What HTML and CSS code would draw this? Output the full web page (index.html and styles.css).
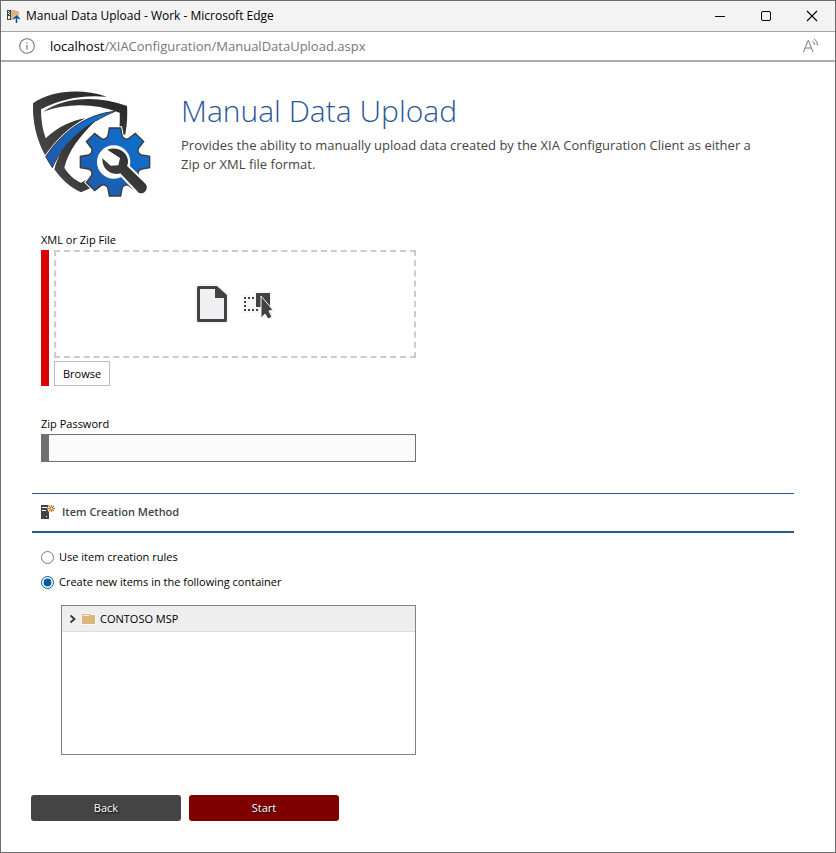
FILE: index.html
```html
<!DOCTYPE html>
<html lang="en">
<head>
  <meta charset="UTF-8">
  <meta name="viewport" content="width=device-width, initial-scale=1.0">
  <title>Manual Data Upload</title>
  <link rel="stylesheet" href="styles.css">
</head>
<body>
  <div class="window">

    <!-- Title bar -->
    <header class="titlebar">
      <svg class="app-icon" width="15" height="15" viewBox="0 0 15 15" aria-hidden="true">
        <path d="M4 1h5l1 1h3v9H4z" fill="#dcb67a"/>
        <path d="M1 1h4v10H1z" fill="#424242"/>
        <path d="M2 2h1v1H2zM3 3h1v1H3zM2 4h1v1H2zM3 5h1v1H3zM2 7h2v3H2z" fill="#f3f3f3"/>
        <path d="M7 13V9l3-3 4 3v4z" fill="#f3f3f3"/>
        <path d="M10.500 14V7.500M7.500 10l3-3 3 3" fill="none" stroke="#00539c" stroke-width="1.500"/>
      </svg>
      <span class="window-title">Manual Data Upload - Work - Microsoft Edge</span>
      <div class="window-buttons">
        <button type="button" aria-label="Minimize">
          <svg width="12" height="12" viewBox="0 0 12 12"><path d="M1 6.500h10" stroke="#000"/></svg>
        </button>
        <button type="button" aria-label="Maximize">
          <svg width="12" height="12" viewBox="0 0 12 12"><rect x="1.500" y="1.500" width="9" height="9" rx="1.500" fill="none" stroke="#000"/></svg>
        </button>
        <button type="button" aria-label="Close">
          <svg width="12" height="12" viewBox="0 0 12 12"><path d="M1 1l10 10M11 1L1 11" stroke="#000" stroke-width="1.100"/></svg>
        </button>
      </div>
    </header>

    <!-- Address bar -->
    <div class="addressbar">
      <svg width="16" height="16" viewBox="0 0 16 16" aria-hidden="true">
        <circle cx="8" cy="8" r="7.300" fill="none" stroke="#767676" stroke-width="1.100"/>
        <path d="M8 7v4.500M8 4.200v1.400" stroke="#767676" stroke-width="1.200"/>
      </svg>
      <span class="url"><b>localhost</b>/XIAConfiguration/ManualDataUpload.aspx</span>
      <button type="button" class="read-aloud" aria-label="Read aloud">
        <svg width="16" height="16" viewBox="0 0 16 16" fill="none" stroke="#767676">
          <path d="M.5 14L5 2.500h.500L10 14M2.300 10h6"/>
          <path d="M9.500 3q2 1.500 2 4M11 .7q3.700 2.300 3.500 6.800"/>
        </svg>
      </button>
    </div>

    <main class="page">
      <section class="intro">
        <svg class="logo" width="118" height="107" viewBox="24 15 354 321" aria-hidden="true">
          <defs>
            <linearGradient id="dark" x1="0" y1="1" x2="1" y2="0">
              <stop offset="0" stop-color="#4a4a4a"/>
              <stop offset="1" stop-color="#262626"/>
            </linearGradient>
            <linearGradient id="blue" x1="0" y1="1" x2="1" y2="0">
              <stop offset="0" stop-color="#2257a8"/>
              <stop offset="1" stop-color="#0a74d4"/>
            </linearGradient>
            <path id="gear" d="M-17-102H17L21-80A14 14 0 0 0 42-71L61-86 86-61 71-42A14 14 0 0 0 80-21L104-17V17L80 21A14 14 0 0 0 71 42L86 61 61 86 42 71A14 14 0 0 0 21 80L17 102H-17L-21 80A14 14 0 0 0-42 71L-61 86-86 61-71 42A14 14 0 0 0-80 21L-104 17V-17L-80-21A14 14 0 0 0-71-42L-86-61-61-86-42-71A14 14 0 0 0-21-80z"/>
            <path id="wrench" d="M247 191c25-10 55 2 61 27 2 8 1 16-2 22l56 54c10 14-4 34-21 26l-55-58c-28 8-56-13-54-45l25 22 23-1 5-22z"/>
          </defs>
          <!-- Shield -->
          <g fill="url(#dark)">
            <path d="M24 52C75 15 165 5 245 32 165 25 100 42 48 70c0 30 4 60 14 87 33-32 78-54 119-60-51 28-86 63-121 111C35 160 22 110 24 52z"/>
            <path d="M55 77C115 35 215 25 306 60c2 25 0 60-5 85l-21 10c4-30 5-50 4-75-74-28-154-30-229-3z"/>
            <path d="M88 250C105 190 140 130 208 108c-43 42-78 87-90 137 12 20 32 38 50 45l30-16 8 28-38 17c-33-14-58-39-80-69z"/>
          </g>
          <path d="M62 212C110 140 180 85 270 76 190 110 120 160 82 245z" fill="url(#blue)" stroke="#3a3a3a" stroke-width="3"/>
          <!-- Gear and wrench -->
          <g transform="translate(270 228)">
            <use href="#gear" fill="#fff" stroke="#fff" stroke-width="10"/>
            <use href="#gear" fill="url(#blue)" stroke="#3a3a3a" stroke-width="4"/>
          </g>
          <circle cx="266" cy="228" r="50" fill="#fff"/>
          <use href="#wrench" fill="#fff" stroke="#fff" stroke-width="12" stroke-linejoin="round"/>
          <use href="#wrench" fill="url(#dark)"/>
        </svg>
        <div class="intro-text">
          <h1>Manual Data Upload</h1>
          <p>Provides the ability to manually upload data created by the XIA Configuration Client as either a Zip or XML file format.</p>
        </div>
      </section>

      <form class="upload-form">
        <div class="field">
          <label for="browse">XML or Zip File</label>
          <div class="file-picker">
            <div class="dropzone">
              <svg width="36" height="44" viewBox="0 0 36 44" aria-hidden="true">
                <path d="M5 1h19l11 11v26q0 4-4 4H5q-4 0-4-4V5q0-4 4-4z" fill="#f6f6f6"/>
                <path d="M4.500 5.500h18l9 8v25h-27z" fill="#f0eff1" stroke="#424242" stroke-width="3" stroke-linejoin="round"/>
                <path d="M21 4l12 10v2H21z" fill="#424242"/>
              </svg>
              <svg width="32" height="32" viewBox="0 0 32 32" aria-hidden="true">
                <path d="M0 7h12V3h17v14l2 9-3 4-8 2v-7H0z" fill="#f6f6f6"/>
                <path d="M2 10h12M2 22h14" stroke="#424242" stroke-width="2" stroke-dasharray="2 2"/>
                <path d="M3 13v8" stroke="#424242" stroke-width="2" stroke-dasharray="2 2"/>
                <path d="M14 5h14v14H14z" fill="#424242"/>
                <path d="M19 8l12 14-4 1 3 6-4 2-3-5-4 4z" fill="#424242" stroke="#f6f6f6"/>
              </svg>
            </div>
            <button type="button" id="browse" class="browse">Browse</button>
          </div>
        </div>

        <div class="field">
          <label for="password">Zip Password</label>
          <input type="password" id="password" class="text-input">
        </div>

        <h2 class="section-title">
          <svg width="16" height="16" viewBox="0 0 16 16" aria-hidden="true">
            <path d="M1 1h8v14H1z" fill="#424242"/>
            <path d="M2 3.500h5M2 6.500h4" stroke="#fff"/>
            <path d="M6 12h1v1H6z" fill="#fff"/>
            <circle cx="11.500" cy="4.500" r="4" fill="#fff"/>
            <path d="M11.500 1v7M8 4.500h7M9 2l5 5M14 2L9 7" stroke="#c27d1a" stroke-width="1.200"/>
            <circle cx="11.500" cy="4.500" r="1" fill="#fff"/>
          </svg>
          Item Creation Method
        </h2>

        <div class="options">
          <label class="option"><input type="radio" name="method" value="rules"> Use item creation rules</label>
          <label class="option"><input type="radio" name="method" value="container" checked> Create new items in the following container</label>
        </div>

        <div class="tree">
          <div class="tree-node">
            <svg width="8" height="10" viewBox="0 0 8 10" aria-hidden="true">
              <path d="M1.500 1.500L5.500 5l-4 3.500" fill="none" stroke="#333" stroke-width="1.800"/>
            </svg>
            <svg class="folder" width="15" height="12" viewBox="0 0 15 12" aria-hidden="true">
              <path d="M0 0h11v1h4v11H0z" fill="#f8f8f8"/>
              <path d="M1 1h8l1 1h4v9H1z" fill="#dcb67a"/>
              <path d="M2 2h6l1 1H2z" fill="#f0eff1"/>
            </svg>
            <span>CONTOSO MSP</span>
          </div>
        </div>

        <div class="actions">
          <button type="button" class="btn">Back</button>
          <button type="submit" class="btn btn-start">Start</button>
        </div>
      </form>
    </main>
  </div>
</body>
</html>
```

FILE: styles.css
```css
:root {
  --blue: #2b579a;
  --dark: #444;
  --red: #d00;
  --frame: #6b6b6b;
}

* {
  box-sizing: border-box;
}

body {
  margin: 0;
  font-family: "Open Sans", "Noto Sans", sans-serif;
  font-size: 11px;
  line-height: 16px;
  color: #000;
  background: #fff;
}

button,
input {
  font: inherit;
}

.window {
  min-height: 100vh;
  border: 1px solid var(--frame);
}

/* Title bar */
.titlebar {
  display: flex;
  align-items: center;
  height: 31px;
  padding-left: 5px;
  background: #f3f3f3;
  border-bottom: 1px solid #a6a6a6;
}

.window-title {
  margin-left: 5px;
  font-size: 12px;
}

.window-buttons {
  display: flex;
  margin-left: auto;
}

.window-buttons button {
  display: flex;
  align-items: center;
  justify-content: center;
  width: 46px;
  height: 30px;
  padding: 0;
  border: none;
  background: none;
}

/* Address bar */
.addressbar {
  display: flex;
  align-items: center;
  height: 30px;
  padding: 0 16px 0 18px;
  border-bottom: 2px solid #ababab;
}

.url {
  margin-left: 15px;
  font-size: 13px;
  color: #767676;
}

.url b {
  font-weight: normal;
  color: #000;
}

.read-aloud {
  display: flex;
  margin-left: auto;
  padding: 0;
  border: none;
  background: none;
}

/* Page */
.page {
  padding: 29px 41px 30px 30px;
}

.intro {
  display: flex;
  gap: 30px;
  padding-left: 2px;
}

.logo {
  flex: none;
}

.intro h1 {
  margin: 0;
  font-size: 30px;
  font-weight: 300;
  line-height: 40px;
  color: var(--blue);
}

.intro p {
  max-width: 590px;
  margin: 5px 0 0;
  font-size: 13px;
  line-height: 19px;
  color: var(--dark);
}

.upload-form {
  margin-top: 34px;
}

.field {
  max-width: 385px;
  margin-bottom: 30px;
  padding-left: 10px;
}

.field label {
  display: block;
  margin-bottom: 2px;
}

.file-picker {
  padding-left: 5px;
  border-left: 8px solid var(--red);
}

.dropzone {
  display: flex;
  align-items: center;
  justify-content: center;
  gap: 12px;
  height: 108px;
  margin-bottom: 3px;
  padding-right: 3px;
  border: 2px dashed #ccc;
}

.browse {
  display: block;
  height: 25px;
  padding: 0 8px;
  border: 1px solid #bbb;
  background: #fff;
  color: #000;
}

.text-input {
  display: block;
  width: 100%;
  height: 28px;
  padding: 0 6px;
  border: 1px solid #707070;
  border-left-width: 8px;
  background: #fafafa;
}

.section-title {
  display: flex;
  align-items: center;
  gap: 6px;
  height: 40px;
  margin: 31px 0 16px 1px;
  padding: 0 0 2px 8px;
  border-top: 1px solid var(--blue);
  border-bottom: 2px solid var(--blue);
  font-size: 11px;
  font-weight: 600;
  color: var(--dark);
}

.options {
  display: flex;
  flex-direction: column;
  gap: 9px;
  padding-left: 10px;
}

.option {
  display: flex;
  align-items: center;
  gap: 5px;
}

.option input {
  width: 13px;
  height: 13px;
  margin: 0;
  accent-color: #005ba1;
}

/* Container tree */
.tree {
  max-width: 355px;
  height: 150px;
  margin-top: 15px;
  margin-left: 30px;
  border: 1px solid #828282;
}

.tree-node {
  display: flex;
  align-items: center;
  height: 26px;
  padding-left: 7px;
  border-bottom: 1px solid #ddd;
  background: #eee;
}

.folder {
  margin: 0 4px;
}

.actions {
  display: flex;
  gap: 8px;
  margin-top: 40px;
}

.btn {
  width: 150px;
  height: 26px;
  padding: 0;
  border: none;
  border-radius: 3px;
  background: var(--dark);
  color: #fff;
  text-shadow: 1px 1px 2px #000;
}

.btn-start {
  background: #800000;
}
```
